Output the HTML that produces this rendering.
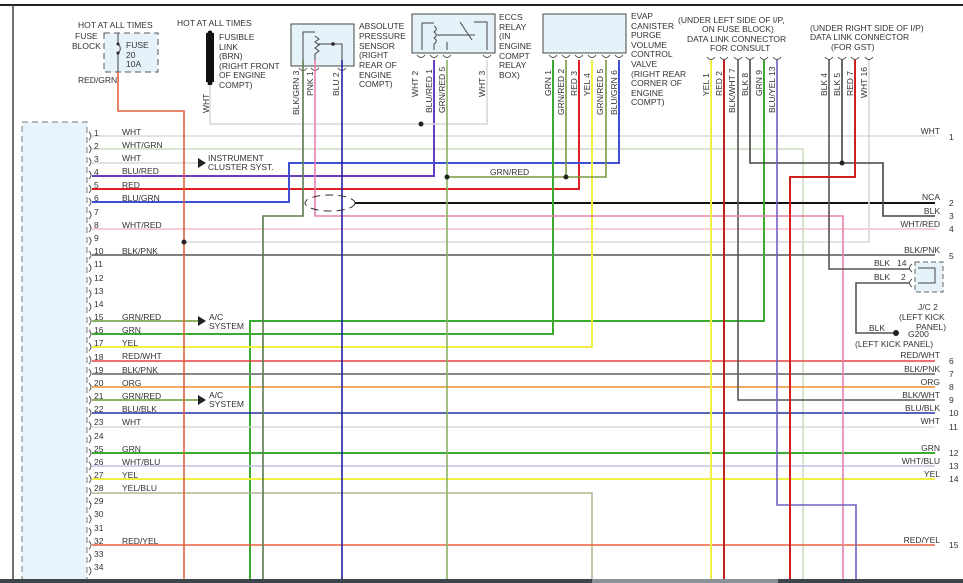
<!DOCTYPE html>
<html><head><meta charset="utf-8"><style>
html,body{margin:0;padding:0;background:#fff;width:963px;height:583px;overflow:hidden}
svg{display:block}
text{font-family:"Liberation Sans",sans-serif;font-size:8.5px;fill:#333}
</style></head><body>
<svg width="963" height="583" viewBox="0 0 963 583" xmlns="http://www.w3.org/2000/svg">
<rect x="0" y="0" width="963" height="583" fill="#fff"/>
<line x1="0" y1="5" x2="963" y2="5" stroke="#222" stroke-width="2"/>
<line x1="13" y1="5" x2="13" y2="583" stroke="#444" stroke-width="1.5"/>
<rect x="22" y="122" width="65" height="470" fill="#e8f4fc" stroke="#777" stroke-dasharray="6,4"/>
<rect x="104" y="33" width="54" height="39" fill="#e6f2fa" stroke="#555" stroke-dasharray="6,4"/>
<rect x="206" y="33" width="8" height="49" fill="#111"/>
<circle cx="210" cy="33" r="2.5" fill="#111"/><circle cx="210" cy="83" r="2.5" fill="#111"/>
<rect x="291" y="24" width="63" height="42" fill="#e6f2fa" stroke="#444"/>
<rect x="412" y="14" width="83" height="39" fill="#e6f2fa" stroke="#444"/>
<rect x="543" y="14" width="83" height="39" fill="#e6f2fa" stroke="#444"/>
<rect x="915" y="262" width="28" height="30" fill="#e6f2fa" stroke="#666" stroke-dasharray="5,3"/>
<g fill="none" stroke="#444" stroke-width="1">
<path d="M118 33V44 M118 53V72 M118 44c3 2 3 7 0 9"/>
<path d="M303 62V32H315 M315 36l4 3-4 3 4 3-4 3 4 3-4 3V62 M342 62V44H318 M422 50V23H434 M434 26c3 2 3 4 0 6c3 2 3 4 0 6c3 2 3 4 0 6V50 M447 50V42 M437 35H475 M460 22l12 18 M487 50V22H474"/>
<path d="M918 268H935V283H918"/>
</g>
<!-- connector cups -->
<g fill="none" stroke="#444" stroke-width="0.9">
<path d="M299 68q4 5 8 0 M311 68q4 5 8 0 M338 68q4 5 8 0"/>
<path d="M417 55q4 5 8 0 M430 55q4 5 8 0 M443 55q4 5 8 0 M483 55q4 5 8 0"/>
<path d="M549 55q4 5 8 0 M562 55q4 5 8 0 M575 55q4 5 8 0 M588 55q4 5 8 0 M602 55q4 5 8 0 M615 55q4 5 8 0"/>
<path d="M707 57q4 5 8 0 M720 57q4 5 8 0 M734 57q4 5 8 0 M746 57q4 5 8 0 M760 57q4 5 8 0 M773 57q4 5 8 0"/>
<path d="M825 57q4 5 8 0 M838 57q4 5 8 0 M851 57q4 5 8 0 M865 57q4 5 8 0"/>
<path d="M912 264q-5 4 0 8 M912 279q-5 4 0 8"/>
</g>
<g fill="none" stroke="#555" stroke-width="0.9">
<path d="M89 132q4 4 0 8 M89 145q4 4 0 8 M89 158q4 4 0 8 M89 171q4 4 0 8 M89 185q4 4 0 8 M89 198q4 4 0 8 M89 211q4 4 0 8 M89 224q4 4 0 8 M89 237q4 4 0 8 M89 251q4 4 0 8 M89 264q4 4 0 8 M89 277q4 4 0 8 M89 290q4 4 0 8 M89 303q4 4 0 8 M89 317q4 4 0 8 M89 330q4 4 0 8 M89 343q4 4 0 8 M89 356q4 4 0 8 M89 369q4 4 0 8 M89 383q4 4 0 8 M89 396q4 4 0 8 M89 409q4 4 0 8 M89 422q4 4 0 8 M89 435q4 4 0 8 M89 449q4 4 0 8 M89 462q4 4 0 8 M89 475q4 4 0 8 M89 488q4 4 0 8 M89 501q4 4 0 8 M89 515q4 4 0 8 M89 528q4 4 0 8 M89 541q4 4 0 8 M89 554q4 4 0 8 M89 567q4 4 0 8"/>
</g>
<circle cx="118" cy="44" r="1.5" fill="#222"/><circle cx="118" cy="53" r="1.5" fill="#222"/>
<circle cx="333" cy="44" r="1.8" fill="#222"/>
<g fill="none" stroke-width="1.6">
<path d="M92 136H935" stroke="#d8d8d8"/>
<path d="M92 149H803V583" stroke="#c8dcc0"/>
<path d="M92 163H200" stroke="#d8d8d8"/>
<path d="M92 176H434V60" stroke="#6a3cc0" stroke-width="2"/>
<path d="M92 189H579V60" stroke="#e02020" stroke-width="2"/>
<path d="M92 202H289V163H619V60" stroke="#4050d0" stroke-width="2"/>
<path d="M355 203H935" stroke="#111" stroke-width="2"/>
<path d="M92 229H935" stroke="#f0c0c8"/>
<path d="M184 242H869V60" stroke="#d8d8d8"/>
<path d="M92 255H935" stroke="#555"/>
<path d="M92 321H200" stroke="#6a9a30"/>
<path d="M92 334H553V60" stroke="#3aaa30" stroke-width="2"/>
<path d="M250 583V321H764V60" stroke="#3aaa30" stroke-width="2"/>
<path d="M92 347H592V60" stroke="#f0f040" stroke-width="2"/>
<path d="M92 361H935" stroke="#e84040"/>
<path d="M92 374H935" stroke="#888" stroke-width="2"/>
<path d="M92 387H935" stroke="#f09030"/>
<path d="M92 400H200" stroke="#6a9a30"/>
<path d="M738 60V400H935" stroke="#555"/>
<path d="M92 413H935" stroke="#2030a0"/>
<path d="M92 427H935" stroke="#d8d8d8"/>
<path d="M92 453H935" stroke="#3aaa30" stroke-width="2"/>
<path d="M92 466H935" stroke="#c0c0e8"/>
<path d="M92 479H935" stroke="#f0f040" stroke-width="2"/>
<path d="M92 493H592V583" stroke="#b0b890"/>
<path d="M92 545H935" stroke="#e86040"/>
<path d="M118 72V111H184V583" stroke="#e06040" stroke-width="1.6"/>
<path d="M210 85V124H487V60" stroke="#d8d8d8"/>
<path d="M303 60V216H263V583" stroke="#5a7a50" stroke-width="1.6"/>
<path d="M315 60V216H843V583" stroke="#e880b0" stroke-width="1.6"/>
<path d="M342 60V583" stroke="#2020a0" stroke-width="1.6"/>
<path d="M447 60V583" stroke="#8ab060" stroke-width="1.6"/>
<path d="M447 177H606V60 M566 60V177" stroke="#7a9a40" stroke-width="1.6"/>
<path d="M711 60V583" stroke="#f0f040" stroke-width="2"/>
<path d="M724 60V583" stroke="#c02020" stroke-width="2"/>
<path d="M750 60V163H883V216H935" stroke="#444" stroke-width="1.6"/>
<path d="M842 60V163" stroke="#444" stroke-width="1.6"/>
<path d="M777 60V505H856V583" stroke="#7060c0" stroke-width="1.6"/>
<path d="M829 60V269H910" stroke="#555" stroke-width="1.6"/>
<path d="M855 60V177H790V583" stroke="#d02020" stroke-width="2"/>
<path d="M910 283H856V333H893" stroke="#555" stroke-width="1.6"/>
</g>
<g fill="#222">
<circle cx="184" cy="242" r="2.5"/><circle cx="421" cy="124" r="2.5"/><circle cx="447" cy="177" r="2.5"/><circle cx="566" cy="177" r="2.5"/><circle cx="842" cy="163" r="2.5"/><circle cx="896" cy="333" r="3"/>
<path d="M198 158l8 5-8 5z M198 316l8 5-8 5z M198 395l8 5-8 5z"/>
</g>
<ellipse cx="330" cy="203" rx="25" ry="8" fill="none" stroke="#333" stroke-dasharray="8,5"/>
<rect x="0" y="579" width="963" height="4" fill="#3c444c"/>
<rect x="592" y="579" width="186" height="4" fill="#8a9298"/>
<text x="78" y="28">HOT AT ALL TIMES</text>
<text x="75" y="39">FUSE</text><text x="72" y="49">BLOCK</text>
<text x="126" y="48">FUSE</text><text x="126" y="58">20</text><text x="126" y="67">10A</text>
<text x="78" y="83">RED/GRN</text>
<text x="177" y="26">HOT AT ALL TIMES</text>
<text x="219" y="40">FUSIBLE</text><text x="219" y="50">LINK</text><text x="219" y="59">(BRN)</text><text x="219" y="69">(RIGHT FRONT</text><text x="219" y="78">OF ENGINE</text><text x="219" y="88">COMPT)</text>
<text x="359" y="29">ABSOLUTE</text><text x="359" y="39">PRESSURE</text><text x="359" y="49">SENSOR</text><text x="359" y="58">(RIGHT</text><text x="359" y="68">REAR OF</text><text x="359" y="78">ENGINE</text><text x="359" y="87">COMPT)</text>
<text x="499" y="20">ECCS</text><text x="499" y="30">RELAY</text><text x="499" y="39">(IN</text><text x="499" y="49">ENGINE</text><text x="499" y="59">COMPT</text><text x="499" y="68">RELAY</text><text x="499" y="78">BOX)</text>
<text x="631" y="19">EVAP</text><text x="631" y="29">CANISTER</text><text x="631" y="38">PURGE</text><text x="631" y="48">VOLUME</text><text x="631" y="57">CONTROL</text><text x="631" y="67">VALVE</text><text x="631" y="77">(RIGHT REAR</text><text x="631" y="86">CORNER OF</text><text x="631" y="96">ENGINE</text><text x="631" y="105">COMPT)</text>
<text x="678" y="23">(UNDER LEFT SIDE OF I/P,</text><text x="702" y="32">ON FUSE BLOCK)</text><text x="687" y="42">DATA LINK CONNECTOR</text><text x="710" y="51">FOR CONSULT</text>
<text x="810" y="31">(UNDER RIGHT SIDE OF I/P)</text><text x="810" y="40">DATA LINK CONNECTOR</text><text x="831" y="50">(FOR GST)</text>
<text x="490" y="175">GRN/RED</text>
<text x="208" y="161">INSTRUMENT</text><text x="208" y="170">CLUSTER SYST.</text>
<text x="209" y="320">A/C</text><text x="209" y="329">SYSTEM</text>
<text x="209" y="398">A/C</text><text x="209" y="407">SYSTEM</text>
<text x="918" y="310">J/C 2</text><text x="899" y="320">(LEFT KICK</text><text x="916" y="330">PANEL)</text>
<text x="869" y="331">BLK</text><text x="908" y="337">G200</text><text x="855" y="347">(LEFT KICK PANEL)</text>
<text x="874" y="266">BLK</text><text x="897" y="266">14</text><text x="874" y="280">BLK</text><text x="901" y="280">2</text>
<g font-size="8.5">
<text transform="translate(209,113) rotate(-90)">WHT</text>
<text transform="translate(299,115) rotate(-90)">BLK/GRN 3</text>
<text transform="translate(313,96) rotate(-90)">PNK 1</text>
<text transform="translate(339,96) rotate(-90)">BLU 2</text>
<text transform="translate(418,97) rotate(-90)">WHT 2</text>
<text transform="translate(432,113) rotate(-90)">BLU/RED 1</text>
<text transform="translate(445,113) rotate(-90)">GRN/RED 5</text>
<text transform="translate(485,97) rotate(-90)">WHT 3</text>
<text transform="translate(551,96) rotate(-90)">GRN 1</text>
<text transform="translate(564,115) rotate(-90)">GRN/RED 2</text>
<text transform="translate(577,96) rotate(-90)">RED 3</text>
<text transform="translate(590,96) rotate(-90)">YEL 4</text>
<text transform="translate(603,115) rotate(-90)">GRN/RED 5</text>
<text transform="translate(617,115) rotate(-90)">BLU/GRN 6</text>
<text transform="translate(709,96) rotate(-90)">YEL 1</text>
<text transform="translate(722,96) rotate(-90)">RED 2</text>
<text transform="translate(735,113) rotate(-90)">BLK/WHT 7</text>
<text transform="translate(748,96) rotate(-90)">BLK 8</text>
<text transform="translate(762,96) rotate(-90)">GRN 9</text>
<text transform="translate(775,113) rotate(-90)">BLU/YEL 13</text>
<text transform="translate(827,96) rotate(-90)">BLK 4</text>
<text transform="translate(840,96) rotate(-90)">BLK 5</text>
<text transform="translate(853,96) rotate(-90)">RED 7</text>
<text transform="translate(867,98) rotate(-90)">WHT 16</text>
</g>
<g>
<text x="94" y="136">1</text><text x="122" y="135">WHT</text>
<text x="94" y="149">2</text><text x="122" y="148">WHT/GRN</text>
<text x="94" y="162">3</text><text x="122" y="161">WHT</text>
<text x="94" y="175">4</text><text x="122" y="174">BLU/RED</text>
<text x="94" y="188">5</text><text x="122" y="188">RED</text>
<text x="94" y="201">6</text><text x="122" y="201">BLU/GRN</text>
<text x="94" y="215">7</text>
<text x="94" y="228">8</text><text x="122" y="228">WHT/RED</text>
<text x="94" y="241">9</text>
<text x="94" y="254">10</text><text x="122" y="254">BLK/PNK</text>
<text x="94" y="267">11</text><text x="94" y="281">12</text><text x="94" y="294">13</text><text x="94" y="307">14</text>
<text x="94" y="320">15</text><text x="122" y="320">GRN/RED</text>
<text x="94" y="333">16</text><text x="122" y="333">GRN</text>
<text x="94" y="346">17</text><text x="122" y="346">YEL</text>
<text x="94" y="360">18</text><text x="122" y="359">RED/WHT</text>
<text x="94" y="373">19</text><text x="122" y="373">BLK/PNK</text>
<text x="94" y="386">20</text><text x="122" y="386">ORG</text>
<text x="94" y="399">21</text><text x="122" y="399">GRN/RED</text>
<text x="94" y="412">22</text><text x="122" y="412">BLU/BLK</text>
<text x="94" y="425">23</text><text x="122" y="425">WHT</text>
<text x="94" y="439">24</text>
<text x="94" y="452">25</text><text x="122" y="452">GRN</text>
<text x="94" y="465">26</text><text x="122" y="465">WHT/BLU</text>
<text x="94" y="478">27</text><text x="122" y="478">YEL</text>
<text x="94" y="491">28</text><text x="122" y="491">YEL/BLU</text>
<text x="94" y="504">29</text><text x="94" y="517">30</text><text x="94" y="531">31</text>
<text x="94" y="544">32</text><text x="122" y="544">RED/YEL</text>
<text x="94" y="557">33</text><text x="94" y="570">34</text>
</g>
<g text-anchor="end">
<text x="940" y="134">WHT</text><text x="940" y="200">NCA</text><text x="940" y="214">BLK</text><text x="940" y="227">WHT/RED</text><text x="940" y="253">BLK/PNK</text>
<text x="940" y="358">RED/WHT</text><text x="940" y="372">BLK/PNK</text><text x="940" y="385">ORG</text><text x="940" y="398">BLK/WHT</text><text x="940" y="411">BLU/BLK</text><text x="940" y="424">WHT</text>
<text x="940" y="451">GRN</text><text x="940" y="464">WHT/BLU</text><text x="940" y="477">YEL</text><text x="940" y="543">RED/YEL</text>
</g>
<g>
<text x="949" y="140">1</text><text x="949" y="206">2</text><text x="949" y="219">3</text><text x="949" y="232">4</text><text x="949" y="259">5</text>
<text x="949" y="364">6</text><text x="949" y="377">7</text><text x="949" y="390">8</text><text x="949" y="403">9</text><text x="949" y="416">10</text><text x="949" y="430">11</text>
<text x="949" y="456">12</text><text x="949" y="469">13</text><text x="949" y="482">14</text><text x="949" y="548">15</text>
</g>
</svg>
</body></html>
